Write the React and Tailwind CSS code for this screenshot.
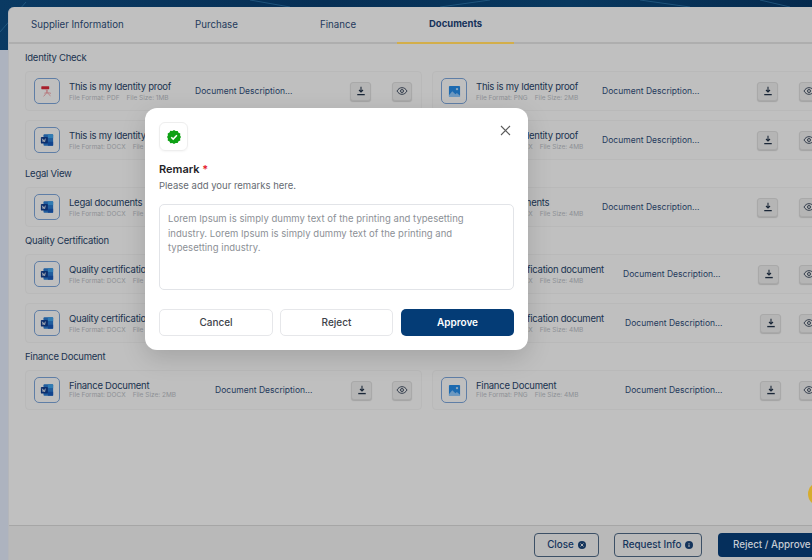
import React from "react";

const font = { fontFamily: "Inter, 'Liberation Sans', sans-serif" };

function WordIcon() {
  return (
    <svg width="14" height="14" viewBox="0 0 16 16">
      <rect x="4" y="1.500" width="11" height="13" rx="1" fill="#205d9e" />
      <rect x="9" y="1.500" width="6" height="4.300" fill="#317cb3" />
      <rect x="9" y="10" width="6" height="4.500" fill="#12448e" />
      <rect x="1" y="4.500" width="8" height="7.500" rx="1" fill="#0c2f6d" />
      <path d="M2.600 6.400l.9 3.600.9-2.400.9 2.400.9-3.600" fill="none" stroke="#c0c0c0" strokeWidth=".8" />
    </svg>
  );
}
function PdfIcon() {
  return (
    <svg width="14" height="14" viewBox="0 0 16 16" fill="none">
      <rect x="1.500" y="2.500" width="9" height="3.500" rx=".5" fill="#a81f2b" />
      <path d="M7 6c.4 2.500 1.500 5 5 7.500M8.500 6.500c0 3-2 5.500-4.500 7.500M5 10.500c2-.6 5-.8 7.500.2" stroke="#b8777b" strokeWidth="1" />
    </svg>
  );
}
function ImageIcon() {
  return (
    <svg width="13" height="13" viewBox="0 0 14 14">
      <rect x="1" y="1" width="12" height="12" rx="1" fill="#1c6ab0" />
      <circle cx="9.700" cy="4.400" r="1.300" fill="#8fa8bd" />
      <path d="M1 11l3.600-4.400L8 10l1.600-1.500L13 11.500V13H1z" fill="#6c98c0" />
    </svg>
  );
}
const icons = { word: <WordIcon />, pdf: <PdfIcon />, image: <ImageIcon /> };

function DownloadBtn() {
  return (
    <span className="w-[21px] h-[19px] flex items-center justify-center rounded-[3px] bg-[#b5b5b5] border border-[#a9a9a9] shadow-[0_1px_1px_rgba(0,0,0,0.15)]">
      <svg width="10" height="10" viewBox="0 0 12 12" fill="none" stroke="#1a2738" strokeWidth="1.300">
        <path d="M6 1v6M3.600 4.800L6 7.200l2.400-2.400" />
        <path d="M1.500 10.300h9" strokeWidth="1.600" />
      </svg>
    </span>
  );
}
function EyeBtn() {
  return (
    <span className="w-[20px] h-[19px] flex items-center justify-center rounded-[3px] bg-[#b5b5b5] border border-[#a9a9a9] shadow-[0_1px_1px_rgba(0,0,0,0.15)]">
      <svg width="12" height="10" viewBox="0 0 14 12" fill="none" stroke="#1a2738" strokeWidth="1">
        <path d="M1 6c1.500-2.600 3.500-4 6-4s4.500 1.400 6 4c-1.500 2.600-3.500 4-6 4S2.500 8.600 1 6z" />
        <circle cx="7" cy="6" r="1.800" />
      </svg>
    </span>
  );
}

function Card({ icon, name, format, size, nameW, gap = "gap-[21px]", tight }) {
  return (
    <div className="w-[397px] h-[40px] shrink-0 flex items-center border border-[#b9b9b9] rounded-[4px] bg-[#bfbfbf] pl-[8px]">
      <span className="w-[26px] h-[26px] shrink-0 flex items-center justify-center rounded-[5px] border border-[#5f7ea6]">
        {icons[icon]}
      </span>
      <div className={`ml-[9px] shrink-0 flex flex-col ${nameW}`}>
        <span className={`text-[9.500px] tracking-[-0.25px] whitespace-nowrap text-[#1a3350] ${tight ? "leading-[10px]" : "leading-[14px]"}`}>{name}</span>
        <span className="text-[6.500px] leading-[9px] whitespace-nowrap text-[#8d9095]">
          File Format: {format}<span className="ml-[7px]">File Size: {size}</span>
        </span>
      </div>
      <span className="text-[8.500px] tracking-[0.02px] whitespace-nowrap text-[#1f3a5c]">Document Description...</span>
      <span className={`ml-auto flex shrink-0 pr-[9px] ${gap}`}>
        <DownloadBtn />
        <EyeBtn />
      </span>
    </div>
  );
}

function Row({ children }) {
  return <div className="flex gap-[10px] w-[820px]">{children}</div>;
}
function Section({ children }) {
  return <h3 className="text-[9.500px] leading-[14px] tracking-[-0.25px] font-normal text-[#1a3350]">{children}</h3>;
}

export default function App() {
  return (
    <div style={font} className="relative w-[812px] h-[560px] overflow-hidden bg-[#adb3bf]">
      <div className="absolute left-0 top-0 w-full h-[50px] bg-[linear-gradient(90deg,#0a3a63,#062f55_40%,#08385f_70%,#052a4e)]">
        <svg width="812" height="50" className="block" fill="none" stroke="#2f6a92" strokeWidth=".6">
          <path d="M0 32L26 2M250 0l40 7M640 0l50 7M760 0l30 7M440 7l50-7" />
        </svg>
      </div>
      <div className="relative pt-[7px] pl-[8px] h-[560px] flex">
        <div className="flex-1 min-w-0 flex flex-col bg-[#c0c0c0] rounded-tl-[6px] border-l border-[#b4b6ba] overflow-hidden">
          <div className="h-[37px] shrink-0 flex border-b-2 border-[#aeaeae] text-[9.700px] text-[#1f3a5c]">
            <span className="w-[186px] pl-[22px] pt-[11px]">Supplier Information</span>
            <span className="w-[126px] pt-[11px]">Purchase</span>
            <span className="w-[76px] pt-[11px] -ml-[1px]">Finance</span>
            <span className="ml-[1px] w-[117px] h-[37px] pl-[32px] pt-[10px] text-[9.500px] font-bold text-[#16325a] border-b-2 border-[#d3ae4a]">Documents</span>
          </div>
          <div className="flex-1 pl-[16px] pt-[7px] flex flex-col">
            <Section>Identity Check</Section>
            <div className="mt-[6px] flex flex-col gap-[9px]">
              <Row>
                <Card icon="pdf" name="This is my Identity proof" format="PDF" size="1MB" nameW="w-[126px]" />
                <Card icon="image" name="This is my Identity proof" format="PNG" size="2MB" nameW="w-[126px]" />
              </Row>
              <Row>
                <Card icon="word" name="This is my Identity proof" format="DOCX" size="4MB" nameW="w-[126px]" />
                <Card icon="word" name="This is my Identity proof" format="DOCX" size="4MB" nameW="w-[126px]" />
              </Row>
            </div>
            <div className="mt-[7px]"><Section>Legal View</Section></div>
            <div className="mt-[6px]">
              <Row>
                <Card icon="word" name="Legal documents" format="DOCX" size="4MB" nameW="w-[126px]" />
                <Card icon="word" name="Legal documents" format="DOCX" size="4MB" nameW="w-[126px]" />
              </Row>
            </div>
            <div className="mt-[7px]"><Section>Quality Certification</Section></div>
            <div className="mt-[6px] flex flex-col gap-[9px]">
              <Row>
                <Card icon="word" name="Quality certification document" format="DOCX" size="4MB" nameW="w-[147px]" />
                <Card icon="word" name="Quality certification document" format="DOCX" size="4MB" nameW="w-[147px]" gap="gap-[20px]" />
              </Row>
              <Row>
                <Card icon="word" name="Quality certification document" format="DOCX" size="4MB" nameW="w-[149px]" />
                <Card icon="word" name="Quality certification document" format="DOCX" size="4MB" nameW="w-[149px]" gap="gap-[18px]" />
              </Row>
            </div>
            <div className="mt-[7px]"><Section>Finance Document</Section></div>
            <div className="mt-[6px]">
              <Row>
                <Card icon="word" name="Finance Document" format="DOCX" size="2MB" nameW="w-[146px]" gap="gap-[20px]" tight />
                <Card icon="image" name="Finance Document" format="PNG" size="4MB" nameW="w-[149px]" gap="gap-[18px]" tight />
              </Row>
            </div>
          </div>
          <div className="h-[35px] shrink-0 border-t border-[#a6a6a6] bg-[#b9b9b9] flex items-start pt-[7px] pl-[525px] gap-[15px] text-[9.800px] font-medium">
            <span className="w-[65px] h-[24px] shrink-0 rounded-[4px] border border-[#3c5066] text-[#14345c] flex items-center justify-center gap-[4px]">
              Close
              <svg width="8" height="8" viewBox="0 0 10 10"><circle cx="5" cy="5" r="5" fill="#14345c" /><path d="M3.200 3.200l3.600 3.600M6.800 3.200L3.200 6.800" stroke="#b9b9b9" strokeWidth="1.200" /></svg>
            </span>
            <span className="w-[88px] h-[24px] shrink-0 rounded-[4px] border border-[#3c5066] text-[#14345c] flex items-center justify-center gap-[4px]">
              Request Info
              <svg width="8" height="8" viewBox="0 0 10 10"><circle cx="5" cy="5" r="5" fill="#14345c" /><path d="M5 4.500v3M5 2.400v1.100" stroke="#b9b9b9" strokeWidth="1.300" /></svg>
            </span>
            <span className="w-[110px] h-[24px] shrink-0 ml-[1px] rounded-[4px] bg-[#052f5c] text-[#c6ccd4] flex items-center pl-[15px] whitespace-nowrap">
              Reject / Approve
            </span>
          </div>
        </div>
      </div>

      <div className="absolute left-[808px] top-[482px] w-[24px] h-[24px] rounded-full bg-[#d6ac2e]" />

      <div className="absolute left-[145px] top-[108px] w-[383px] h-[242px] bg-white rounded-[12px] shadow-[0_8px_24px_rgba(0,0,0,0.15)] px-[14px] pt-[14px]">
        <button className="absolute right-[17px] top-[17px]" aria-label="Close">
          <svg width="11" height="11" viewBox="0 0 11 11" fill="none" stroke="#5c5c5c" strokeWidth="1.100" className="block"><path d="M1 1l9 9M10 1l-9 9" /></svg>
        </button>
        <span className="w-[29px] h-[29px] flex items-center justify-center rounded-[6px] border border-[#eeeeee] shadow-[0_1px_2px_rgba(0,0,0,0.04)]">
          <svg width="14" height="14" viewBox="0 0 14 14">
            <path d="M7 0l1.700 1.100 2-.2.800 1.800 1.800.9-.2 2L14 7l-.9 1.500.2 2-1.800.8-.8 1.800-2-.2L7 14l-1.700-.900-2 .2-.8-1.800-1.800-.900.2-2L0 7l.9-1.600-.2-2 1.800-.800.8-1.800 2 .2z" fill="#0ea114" />
            <path d="M4.200 7.200l2 1.900 3.700-3.900" fill="none" stroke="#fff" strokeWidth="1.500" />
          </svg>
        </span>
        <div className="mt-[11px] text-[11px] leading-[14px] font-semibold text-[#1f2328]">
          Remark <span className="text-[#e5202e]">*</span>
        </div>
        <div className="mt-[3px] text-[9.500px] leading-[14px] text-[#666b72]">Please add your remarks here.</div>
        <div className="mt-[11px] h-[86px] rounded-[5px] border border-[#e2e4e8] px-[8px] pt-[7px] text-[9.500px] leading-[14.500px] tracking-[0.03px] text-[#8c9096]">
          Lorem Ipsum is simply dummy text of the printing and typesetting<br />
          industry. Lorem Ipsum is simply dummy text of the printing and<br />
          typesetting industry.
        </div>
        <div className="mt-[19px] flex text-[10px]">
          <span className="w-[114px] h-[27px] flex items-center justify-center rounded-[5px] border border-[#e6e7ea] font-medium text-[#3d4249]">Cancel</span>
          <span className="ml-[7px] w-[113px] h-[27px] flex items-center justify-center rounded-[5px] border border-[#e6e7ea] font-medium text-[#3d4249]">Reject</span>
          <span className="ml-[8px] w-[113px] h-[27px] flex items-center justify-center rounded-[5px] bg-[#043c76] font-semibold text-white">Approve</span>
        </div>
      </div>
    </div>
  );
}
